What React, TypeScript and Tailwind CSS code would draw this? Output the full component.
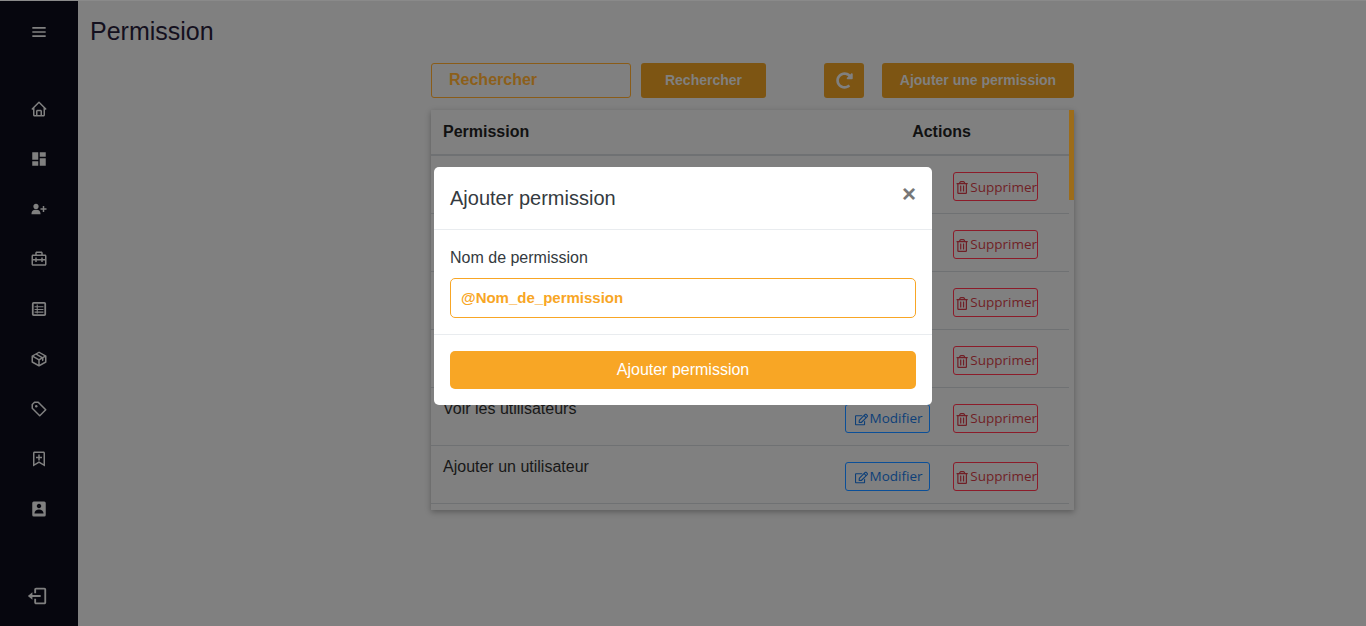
import { BiMenu, BiHome, BiSolidUserPlus, BiBriefcaseAlt2, BiPackage, BiPurchaseTagAlt, BiBookmarkPlus, BiSolidUserRectangle, BiLogOut } from 'react-icons/bi'
import { MdDashboard } from 'react-icons/md'
import { FaRegEdit, FaRegTrashAlt, FaRedoAlt } from 'react-icons/fa'

function TableIcon({ size }: { size: number }) {
  return (
    <svg width={size} height={size} viewBox="0 0 18 18" fill="none" stroke="currentColor">
      <rect x="2" y="2" width="14" height="14" rx="1" strokeWidth="2" />
      <path d="M4 6.5h10M4 9.5h10M4 12.5h10M7 4v10" strokeWidth="1.2" />
    </svg>
  )
}

const navIcons = [
  { Icon: BiHome, size: 18 },
  { Icon: MdDashboard, size: 18 },
  { Icon: BiSolidUserPlus, size: 18 },
  { Icon: BiBriefcaseAlt2, size: 18 },
  { Icon: TableIcon, size: 16 },
  { Icon: BiPackage, size: 18 },
  { Icon: BiPurchaseTagAlt, size: 18 },
  { Icon: BiBookmarkPlus, size: 18 },
  { Icon: BiSolidUserRectangle, size: 18 },
]

const rows = [
  'Voir les permissions',
  'Ajouter une permission',
  'Modifier une permission',
  'Supprimer une permission',
  'Voir les utilisateurs',
  'Ajouter un utilisateur',
  'Modifier un utilisateur',
]

function Sidebar() {
  return (
    <aside className="flex h-full w-[78px] shrink-0 flex-col items-center bg-[#06060e] text-[#808080]">
      <div className="flex h-[62px] items-center justify-center">
        <BiMenu size={20} />
      </div>
      <nav className="mt-[21px] flex flex-col items-center">
        {navIcons.map(({ Icon, size }, i) => (
          <div key={i} className="flex h-[50px] items-center justify-center">
            <Icon size={size} />
          </div>
        ))}
      </nav>
      <div className="mt-auto mb-[19px] flex justify-center pr-[4px]">
        <BiLogOut size={22} />
      </div>
    </aside>
  )
}

function PermissionTable() {
  return (
    <div className="relative h-[400px] overflow-hidden shadow-[0_2px_6px_rgba(0,0,0,0.3)]">
      <table className="w-[638px] table-fixed border-collapse text-[16px] text-[#181818]">
        <thead>
          <tr className="h-[45px] border-b-2 border-[#6f7173] text-left">
            <th className="w-[383px] pl-3 font-bold text-[#111111]">Permission</th>
            <th className="text-center font-bold text-[#111111]">Actions</th>
          </tr>
        </thead>
        <tbody>
          {rows.map(name => (
            <tr key={name} className="h-[58px] border-b border-[#6f7173]">
              <td className="pt-[9px] pl-3 align-top">{name}</td>
              <td className="align-top">
                <div className="flex pt-[16px] pl-[31px] font-['Open_Sans',sans-serif] text-[13.5px] leading-none">
                  <button className="flex h-[29px] w-[85px] items-center justify-center rounded-[3px] border border-[#0b4f98] pt-[2px] pl-[2px] text-[#0d3f78]">
                    <FaRegEdit size={13} className="mr-[2px]" />
                    Modifier
                  </button>
                  <button className="ml-[23px] flex h-[29px] w-[85px] items-center justify-center rounded-[3px] border border-[#8c1c2a] pt-[2px] pl-[2px] text-[#701f26]">
                    <FaRegTrashAlt size={13} className="mr-[2px]" />
                    Supprimer
                  </button>
                </div>
              </td>
            </tr>
          ))}
        </tbody>
      </table>
      <div className="absolute top-0 right-0 h-[90px] w-[5px] bg-[#9c6c1a]" />
    </div>
  )
}

function AddPermissionModal() {
  return (
    <div className="fixed inset-0">
      <div className="ml-[434px] mt-[167px] w-[498px] rounded-[5px] bg-white text-[#212529]">
        <div className="flex h-[63px] items-start justify-between border-b border-[#e9ecef] px-[16px] pt-[16px]">
          <h5 className="text-[20px] leading-[30px] text-[#343a40]">Ajouter permission</h5>
          <span className="mt-[-4px] text-[24px] leading-[30px] font-bold text-[#777777]">×</span>
        </div>
        <div className="h-[105px] border-b border-[#e9ecef] px-[16px] pt-[16px]">
          <label className="block text-[16px] leading-[24px] text-[#343a40]">Nom de permission</label>
          <div className="mt-[8px] flex h-[40px] items-center rounded-[5px] border border-[#f8a625] pl-[10px] text-[15px] font-bold text-[#f8a625]">
            @Nom_de_permission
          </div>
        </div>
        <div className="p-[16px]">
          <button className="h-[38px] w-full rounded-[5px] bg-[#f8a625] text-[16px] text-white">Ajouter permission</button>
        </div>
      </div>
    </div>
  )
}

export default function App() {
  return (
    <div className="flex h-screen overflow-hidden border-t border-[#8a8a8a] bg-[#808080] font-['Liberation_Sans',Arial,sans-serif]">
      <Sidebar />
      <main className="min-w-0 flex-1 pl-3">
        <h1 className="mt-[14px] text-[25px] leading-[33px] text-[#14101e]">Permission</h1>
        <div className="mt-[15px] ml-[341px] w-[643px]">
          <div className="flex h-[35px] items-stretch">
            <div className="flex w-[200px] items-center rounded-[3px] border border-[#8a5c18] pb-[2px] pl-[17px] text-[16px] font-bold text-[#8c5f1a]">
              Rechercher
            </div>
            <button className="ml-[10px] w-[125px] rounded-[3px] bg-[#7d5513] text-[14px] font-bold text-[#808080]">Rechercher</button>
            <button className="ml-[58px] flex w-[40px] items-center justify-center rounded-[3px] bg-[#7d5513] text-[#808080]">
              <FaRedoAlt size={17} />
            </button>
            <button className="ml-[18px] w-[192px] rounded-[3px] bg-[#7d5513] text-[14px] font-bold text-[#808080]">Ajouter une permission</button>
          </div>
          <div className="mt-[12px]">
            <PermissionTable />
          </div>
        </div>
      </main>
      <AddPermissionModal />
    </div>
  )
}
